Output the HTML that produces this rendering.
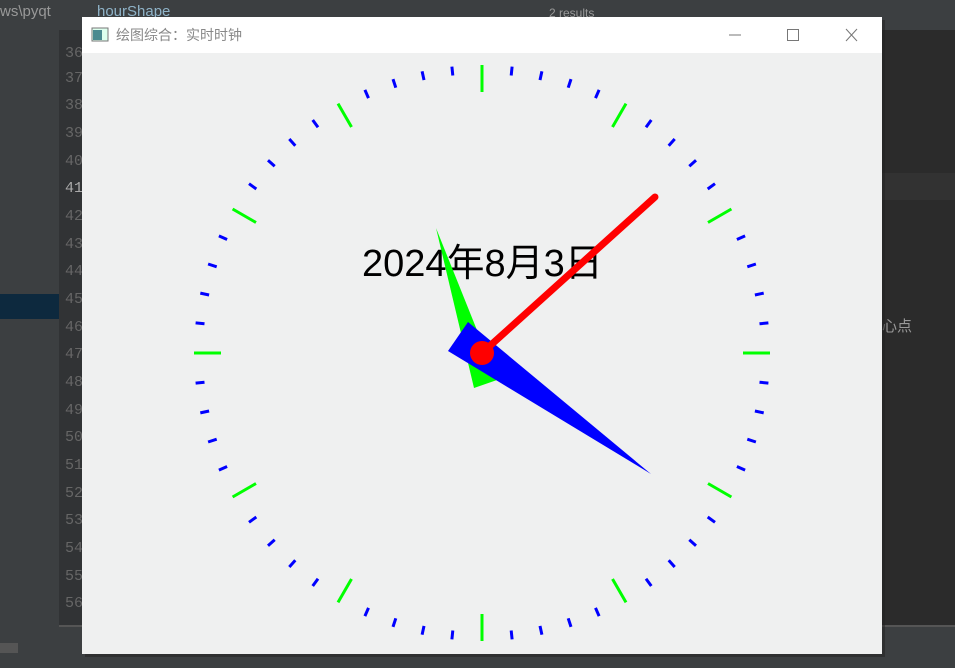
<!DOCTYPE html>
<html><head><meta charset="utf-8"><style>
html,body{margin:0;padding:0;width:955px;height:668px;overflow:hidden;background:#2b2b2b;font-family:"Liberation Sans","Noto Sans CJK SC",sans-serif}
</style></head><body>
<svg id="s" width="955" height="668" viewBox="0 0 955 668" xmlns="http://www.w3.org/2000/svg" style="position:absolute;left:0;top:0">
<rect x="0" y="0" width="955" height="668" fill="#2b2b2b"/>
<rect x="0" y="0" width="59" height="668" fill="#3c3f41"/>
<rect x="0" y="294" width="59" height="25" fill="#0d293e"/>
<rect x="59" y="0" width="24" height="668" fill="#313335"/>
<rect x="59" y="0" width="896" height="30" fill="#3c3f41"/>
<rect x="882" y="173" width="73" height="27" fill="#323232"/>
<rect x="59" y="625" width="896" height="30" fill="#3c3f41"/>
<rect x="59" y="625" width="896" height="2" fill="#555"/>
<rect x="0" y="655" width="955" height="13" fill="#3c3f41"/>
<rect x="0" y="643" width="18" height="10" fill="#555"/>
<text x="0" y="16" font-size="15" fill="#999">ws\pyqt</text>
<text x="97" y="16" font-size="15" fill="#8fb3c8">hourShape</text>
<text x="549" y="17" font-size="12" fill="#999">2 results</text>
<g font-size="15" fill="#666" font-family="Liberation Mono,monospace">
<text x="65" y="57">36</text><text x="65" y="82">37</text><text x="65" y="109">38</text><text x="65" y="137">39</text><text x="65" y="165">40</text><text x="65" y="192" fill="#aaa">41</text><text x="65" y="220">42</text><text x="65" y="248">43</text><text x="65" y="275">44</text><text x="65" y="303">45</text><text x="65" y="331">46</text><text x="65" y="358">47</text><text x="65" y="386">48</text><text x="65" y="414">49</text><text x="65" y="441">50</text><text x="65" y="469">51</text><text x="65" y="497">52</text><text x="65" y="524">53</text><text x="65" y="552">54</text><text x="65" y="580">55</text><text x="65" y="607">56</text>
</g>
<text x="882" y="331" font-size="15" fill="#999">心点</text>
<rect x="85" y="20" width="800" height="637" fill="#222" opacity="0.5"/>
<rect x="82" y="17" width="800" height="637" fill="#eff0f0"/>
<rect x="82" y="17" width="800" height="36" fill="#ffffff"/>
<rect x="92" y="28" width="16" height="13" fill="#dfe" stroke="#777" stroke-width="1"/>
<rect x="93" y="30" width="9" height="10" fill="#4a8a90"/>
<text x="116" y="40" font-size="14" fill="#888">绘图综合：实时时钟</text>
<line x1="729" y1="35" x2="741" y2="35" stroke="#777" stroke-width="1"/>
<rect x="787.5" y="29.5" width="11" height="11" fill="none" stroke="#777"/>
<path d="M846 29 L857 41 M857 29 L846 41" stroke="#777" stroke-width="1"/>
<g id="ticks"></g>
<text x="362" y="276" font-size="38" fill="#000">2024年8月3日</text>
<polygon points="436,228 474,388 497,380" fill="#00ff00"/>
<polygon points="448,351 468,322 651,474" fill="#0000ff"/>
<line x1="482" y1="353" x2="655" y2="197" stroke="#ff0000" stroke-width="7" stroke-linecap="round"/>
<circle cx="482" cy="353" r="12" fill="#ff0000"/>
</svg>
<script>
var g=document.getElementById('ticks'),h='';
for(var i=0;i<60;i++){var a=i*Math.PI/30,s=Math.sin(a),c=-Math.cos(a),cx=482,cy=353,R=288,r=(i%5==0)?261:279;
h+='<line x1="'+(cx+s*r).toFixed(1)+'" y1="'+(cy+c*r).toFixed(1)+'" x2="'+(cx+s*R).toFixed(1)+'" y2="'+(cy+c*R).toFixed(1)+'" stroke="'+(i%5==0?'#00ff00':'#0000ff')+'" stroke-width="3"/>';}
g.innerHTML=h;
</script>
</body></html>
